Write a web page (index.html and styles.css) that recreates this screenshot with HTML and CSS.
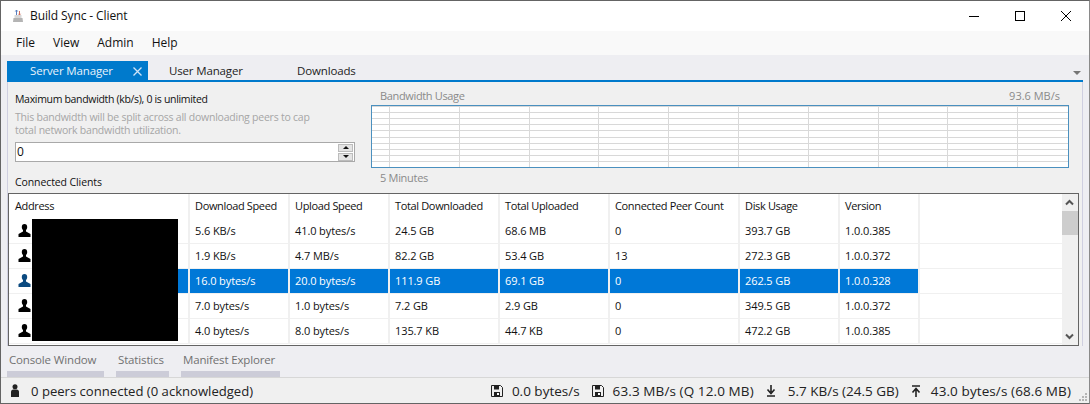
FILE: index.html
```html
<!DOCTYPE html>
<html lang="en">
<head>
  <meta charset="UTF-8" />
  <title>Build Sync - Client</title>
  <link rel="stylesheet" href="styles.css">
</head>
<body>
  <div class="window">
    <header class="titlebar">
      <svg class="app-icon" width="16" height="16" viewBox="0 0 16 16">
        <path d="M3.500 10h9l.5 4H3z" fill="#b4b4b4"/>
        <rect x="4.500" y="7" width="7" height="3" fill="#d8d8d8"/>
        <path d="M6.500 7V2M5.300 3.500 6.500 2l1.200 1.500" stroke="#5a7fc0" fill="none"/>
        <path d="M9.500 3v4M8.500 5.800 9.500 7l1-1.200" stroke="#d06a5a" fill="none"/>
      </svg>
      <span class="title">Build Sync - Client</span>
      <div class="caption">
        <svg width="46" height="31" viewBox="0 0 46 31"><path d="M18 15.500h10" stroke="#000"/></svg>
        <svg width="46" height="31" viewBox="0 0 46 31"><rect x="18.500" y="10.500" width="9" height="9" fill="none" stroke="#000"/></svg>
        <svg width="46" height="31" viewBox="0 0 46 31"><path d="M18 10l10 10M28 10L18 20" stroke="#000" fill="none"/></svg>
      </div>
    </header>

    <nav class="menubar">
      <span>File</span><span>View</span><span>Admin</span><span>Help</span>
    </nav>

    <div class="tabstrip">
      <div class="tab active">Server Manager
        <svg class="tab-close" width="9" height="9" viewBox="0 0 9 9"><path d="M.5.500l8 8M8.500.500l-8 8" stroke="#cfe4f7" stroke-width="1.300"/></svg>
      </div>
      <div class="tab user">User Manager</div>
      <div class="tab">Downloads</div>
      <span class="tab-menu"></span>
    </div>

    <main class="panel">
      <section class="top">
        <div class="limit">
          <label class="limit-label">Maximum bandwidth (kb/s), 0 is unlimited</label>
          <p class="hint">This bandwidth will be split across all downloading peers to cap<br>total network bandwidth utilization.</p>
          <div class="spin">
            <span class="spin-value">0</span>
            <div class="spin-btns">
              <span class="spin-btn"><i class="arrow-up"></i></span>
              <span class="spin-btn"><i class="arrow-down"></i></span>
            </div>
          </div>
          <div class="clients-label">Connected Clients</div>
        </div>
        <div class="usage">
          <div class="usage-head"><span class="usage-title">Bandwidth Usage</span><span>93.6 MB/s</span></div>
          <div class="chart"></div>
          <div class="usage-foot">5 Minutes</div>
        </div>
      </section>

      <section class="clients">
        <table class="grid">
          <colgroup>
            <col class="c-address"><col class="c-speed"><col class="c-speed"><col class="c-total"><col class="c-total"><col class="c-peers"><col class="c-speed"><col class="c-version"><col>
          </colgroup>
          <thead>
            <tr><th>Address</th><th>Download Speed</th><th>Upload Speed</th><th>Total Downloaded</th><th>Total Uploaded</th><th>Connected Peer Count</th><th>Disk Usage</th><th>Version</th><th></th></tr>
          </thead>
          <tbody>
            <tr><td><svg class="user-icon"><use href="#user"/></svg></td><td>5.6 KB/s</td><td>41.0 bytes/s</td><td>24.5 GB</td><td>68.6 MB</td><td>0</td><td>393.7 GB</td><td>1.0.0.385</td><td class="rest"></td></tr>
            <tr><td><svg class="user-icon"><use href="#user"/></svg></td><td>1.9 KB/s</td><td>4.7 MB/s</td><td>82.2 GB</td><td>53.4 GB</td><td>13</td><td>272.3 GB</td><td>1.0.0.372</td><td class="rest"></td></tr>
            <tr class="selected"><td><svg class="user-icon"><use href="#user"/></svg></td><td>16.0 bytes/s</td><td>20.0 bytes/s</td><td>111.9 GB</td><td>69.1 GB</td><td>0</td><td>262.5 GB</td><td>1.0.0.328</td><td class="rest"></td></tr>
            <tr><td><svg class="user-icon"><use href="#user"/></svg></td><td>7.0 bytes/s</td><td>1.0 bytes/s</td><td>7.2 GB</td><td>2.9 GB</td><td>0</td><td>349.5 GB</td><td>1.0.0.372</td><td class="rest"></td></tr>
            <tr><td><svg class="user-icon"><use href="#user"/></svg></td><td>4.0 bytes/s</td><td>8.0 bytes/s</td><td>135.7 KB</td><td>44.7 KB</td><td>0</td><td>472.2 GB</td><td>1.0.0.385</td><td class="rest"></td></tr>
          </tbody>
        </table>
        <div class="redacted"></div>
        <div class="scrollbar">
          <svg width="15" height="17" viewBox="0 0 15 17"><path d="M4 10.500l3.500-3.500 3.500 3.500" fill="none" stroke="#555" stroke-width="2"/></svg>
          <div class="thumb"></div>
          <svg class="scroll-down" width="15" height="17" viewBox="0 0 15 17"><path d="M4 6.500l3.500 3.500 3.500-3.500" fill="none" stroke="#555" stroke-width="2"/></svg>
        </div>
      </section>
    </main>

    <div class="bottom-tabs">
      <div class="bottom-tab t1">Console Window</div>
      <div class="bottom-tab t2">Statistics</div>
      <div class="bottom-tab t3">Manifest Explorer</div>
    </div>

    <footer class="status">
      <svg class="status-icon peers" width="12" height="13" viewBox="0 0 12 13"><circle cx="6" cy="2.800" r="2.500" fill="#222"/><path d="M2 13V8q0-2.500 2.500-2.500h3Q10 5.500 10 8v5z" fill="#222"/></svg>
      <span class="peers-text">0 peers connected (0 acknowledged)</span>
      <div class="status-right">
        <span class="stat"><svg width="12" height="12"><use href="#disk"/></svg>0.0 bytes/s</span>
        <span class="stat wide"><svg width="12" height="12"><use href="#disk"/></svg>63.3 MB/s (Q 12.0 MB)</span>
        <span class="stat arrow"><svg width="10" height="12" viewBox="0 0 10 12"><path d="M5 0v7M1.500 4.500 5 8.500l3.500-4M1 11h8" fill="none" stroke="#222" stroke-width="1.600"/></svg>5.7 KB/s (24.5 GB)</span>
        <span class="stat arrow up wide"><svg width="10" height="12" viewBox="0 0 10 12"><path d="M1 1h8M5 12V4M1.500 7.500 5 3.500l3.500 4" fill="none" stroke="#222" stroke-width="1.600"/></svg>43.0 bytes/s (68.6 MB)</span>
      </div>
      <svg class="grip" width="10" height="10" viewBox="0 0 10 10"><path d="M7 1h2v2H7zM4 4h2v2H4zM7 4h2v2H7zM1 7h2v2H1zM4 7h2v2H4zM7 7h2v2H7z" fill="#b5b5b5"/></svg>
    </footer>
  </div>

  <svg class="defs" width="0" height="0">
    <symbol id="user" viewBox="0 0 13 13">
      <path d="M6.500 0C4.700 0 3.800 1.300 3.800 3c0 1.300.5 2.400 1.200 3v1.500L.5 10v3h12v-3L8 7.500V6c.7-.6 1.200-1.700 1.200-3 0-1.700-.9-3-2.700-3z"/>
    </symbol>
    <symbol id="disk" viewBox="0 0 12 12">
      <path d="M.500.500h9l2 2v9h-11z" fill="none" stroke="#222"/>
      <path d="M3 1h5v3.500H3zM3 7h6v4H3z" fill="#222"/>
      <path d="M6 8h2v2H6z" fill="#fff"/>
    </symbol>
  </svg>
</body>
</html>
```
FILE: styles.css
```css
:root {
  --blue: #007acc;
  --select: #0078d7;
  --strip: #eeeef2;
  --panel: #f0f0f0;
  --edge: #646464;
}

* {
  box-sizing: border-box;
}

html, body {
  margin: 0;
  padding: 0;
  height: 100%;
  overflow: hidden;
}

body {
  font-family: "Open Sans", "Noto Sans", sans-serif;
  font-size: 11px;
  color: #111;
  background: var(--strip);
}

.window {
  height: 404px;
  display: flex;
  flex-direction: column;
  border: 1px solid var(--edge);
  border-right-color: #8a8a8a;
}

.titlebar {
  height: 30px;
  flex: none;
  display: flex;
  align-items: center;
  background: #fff;
  padding-left: 9px;
}

.app-icon {
  margin-right: 4px;
}

.title {
  font-size: 12px;
  letter-spacing: -0.1px;
  margin-bottom: 2px;
}

.caption {
  margin-left: auto;
  display: flex;
  height: 30px;
}

.menubar {
  height: 24px;
  flex: none;
  display: flex;
  align-items: center;
  gap: 18px;
  padding: 0 0 2px 15px;
  background: #f9f9f9;
  font-size: 12px;
}

.tabstrip {
  height: 27px;
  flex: none;
  position: relative;
  display: flex;
  align-items: flex-end;
  padding-left: 6px;
  background: var(--strip);
}

.tabstrip::after {
  content: "";
  position: absolute;
  left: 6px;
  right: 6px;
  bottom: 0;
  height: 2px;
  background: var(--blue);
}

.tab {
  height: 21px;
  width: 141px;
  padding: 2px 0 0 23px;
  font-size: 11.500px;
  letter-spacing: -0.150px;
  color: #222;
  position: relative;
}

.tab.active {
  background: var(--blue);
  color: #e8f3fb;
}

.tab.user {
  padding-left: 21px;
  width: 128px;
}

.tab:last-of-type {
  padding-left: 21px;
}

.tab-close {
  position: absolute;
  right: 6px;
  top: 6px;
}

.tab-menu {
  position: absolute;
  right: 8px;
  bottom: 7px;
  width: 0;
  height: 0;
  border: 4px solid transparent;
  border-top: 4px solid #757575;
  border-bottom: 0;
}

.panel {
  height: 264px;
  flex: none;
  margin: 0 6px;
  background: var(--panel);
  border-left: 1px solid #cfcfe0;
  border-right: 1px solid #cfcfe0;
  display: flex;
  flex-direction: column;
}

.top {
  height: 111px;
  flex: none;
  display: flex;
}

.limit {
  width: 363px;
  padding: 9px 0 0 7px;
  flex: none;
}

.limit-label {
  display: block;
  line-height: 16px;
  font-size: 10.500px;
  letter-spacing: -0.320px;
}

.hint {
  margin: 4px 0 0;
  font-size: 10.500px;
  line-height: 13px;
  color: #a6a6a6;
  letter-spacing: -0.230px;
}

.spin {
  margin-top: 5px;
  width: 340px;
  height: 20px;
  display: flex;
  justify-content: space-between;
  background: #fff;
  border: 1px solid #a9a9a9;
  font-size: 12px;
  line-height: 17px;
  padding-left: 1px;
}

.spin-btns {
  display: flex;
  flex-direction: column;
  justify-content: center;
  gap: 1px;
  width: 16px;
  padding: 0 1px 0 0;
}

.spin-btn {
  height: 8px;
  background: #e4e4e4;
  border: 1px solid #bcbcbc;
  display: flex;
  align-items: center;
  justify-content: center;
}

.arrow-up, .arrow-down {
  width: 0;
  height: 0;
  border: 3px solid transparent;
}

.arrow-up {
  border-top: 0;
  border-bottom: 3px solid #111;
}

.arrow-down {
  border-bottom: 0;
  border-top: 3px solid #111;
}

.clients-label {
  margin-top: 12px;
  line-height: 16px;
  font-size: 10.500px;
  letter-spacing: -0.100px;
}

.usage {
  width: 698px;
  flex: none;
  color: #8a8a8a;
}

.usage-head {
  display: flex;
  justify-content: space-between;
  height: 23px;
  padding: 6px 9px 0 9px;
  line-height: 16px;
}

.usage-title {
  letter-spacing: -0.350px;
}

.chart {
  height: 63px;
  border: 1px solid #4a90bf;
  background-color: #fff;
  background-image:
    repeating-linear-gradient(90deg, transparent -51.800px, transparent 17px, #d9d9d9 17px, #d9d9d9 18px),
    repeating-linear-gradient(180deg, #fff 0.600px, #fff 5.800px, #d8d8d8 5.800px, #d8d8d8 6.800px);
}

.usage-foot {
  padding: 2px 0 0 9px;
  line-height: 16px;
  letter-spacing: -0.300px;
}

.clients {
  flex: 1;
  position: relative;
  width: 1071px;
  background: #fff;
  border: 1px solid var(--edge);
  overflow: hidden;
}

.grid {
  table-layout: fixed;
  border-collapse: collapse;
  width: 1053px;
}

.c-address { width: 180px; }
.c-speed { width: 100px; }
.c-total { width: 110px; }
.c-peers { width: 130px; }
.c-version { width: 80px; }

.grid th {
  height: 24px;
  font-weight: 400;
  text-align: left;
  padding: 0 0 2px 5px;
  border-right: 2px solid #f0f0f0;
  white-space: nowrap;
  letter-spacing: -0.350px;
}

.grid th:first-child {
  padding-left: 6px;
}

.grid th:last-child {
  border-right: 0;
}

.grid td {
  height: 25px;
  padding: 0 0 0 5px;
  border-right: 2px solid #f0f0f0;
  border-bottom: 1px solid #f0f0f0;
  white-space: nowrap;
  letter-spacing: -0.100px;
}

.grid td.rest {
  border-right: 0;
}

.selected td {
  background: var(--select);
  color: #fff;
}

/* the icon keeps a white cell in the selected row */
.selected td:first-child {
  background: linear-gradient(90deg, #fff 23px, var(--select) 23px);
}

.selected td.rest {
  background: #fff;
}

.selected .user-icon {
  fill: #0b4a80;
}

.user-icon {
  width: 13px;
  height: 13px;
  margin-left: 4px;
  display: block;
  fill: #000;
}

/* covers the address column */
.redacted {
  position: absolute;
  left: 23px;
  top: 25px;
  width: 146px;
  height: 122px;
  background: #000;
}

.scrollbar {
  position: absolute;
  right: 0;
  top: 0;
  bottom: 0;
  width: 16px;
  background: #f0f0f0;
  display: flex;
  flex-direction: column;
}

.thumb {
  height: 24px;
  background: #cdcdcd;
}

.scroll-down {
  margin-top: auto;
}

.bottom-tabs {
  height: 31px;
  flex: none;
  display: flex;
  padding-left: 6px;
  gap: 12px;
  color: #717171;
  font-size: 11.500px;
  letter-spacing: -0.150px;
}

.bottom-tab {
  height: 31px;
  padding: 6px 0 0 2px;
  border-bottom: 6px solid #ccccd8;
  line-height: 16px;
  white-space: nowrap;
}

.t1 { width: 97px; }
.t2 { width: 53px; }
.t3 { width: 99px; }

.status {
  flex: 1;
  display: flex;
  align-items: center;
  background: #f0f0f0;
  border-top: 1px solid #d7d7d7;
  padding-left: 8px;
  color: #222;
  position: relative;
}

.peers-text {
  margin-left: 10px;
  font-size: 13.100px;
}

.status-right {
  margin-left: auto;
  display: flex;
  gap: 12px;
  padding-right: 18px;
  font-size: 13.500px;
}

.stat {
  display: flex;
  align-items: center;
  gap: 9px;
}

.stat.wide {
  letter-spacing: 0.100px;
}

.stat.arrow {
  gap: 12px;
}

.stat.arrow.up {
  gap: 10px;
}

.grip {
  position: absolute;
  right: 1px;
  bottom: 1px;
}

.defs {
  position: absolute;
}
```
